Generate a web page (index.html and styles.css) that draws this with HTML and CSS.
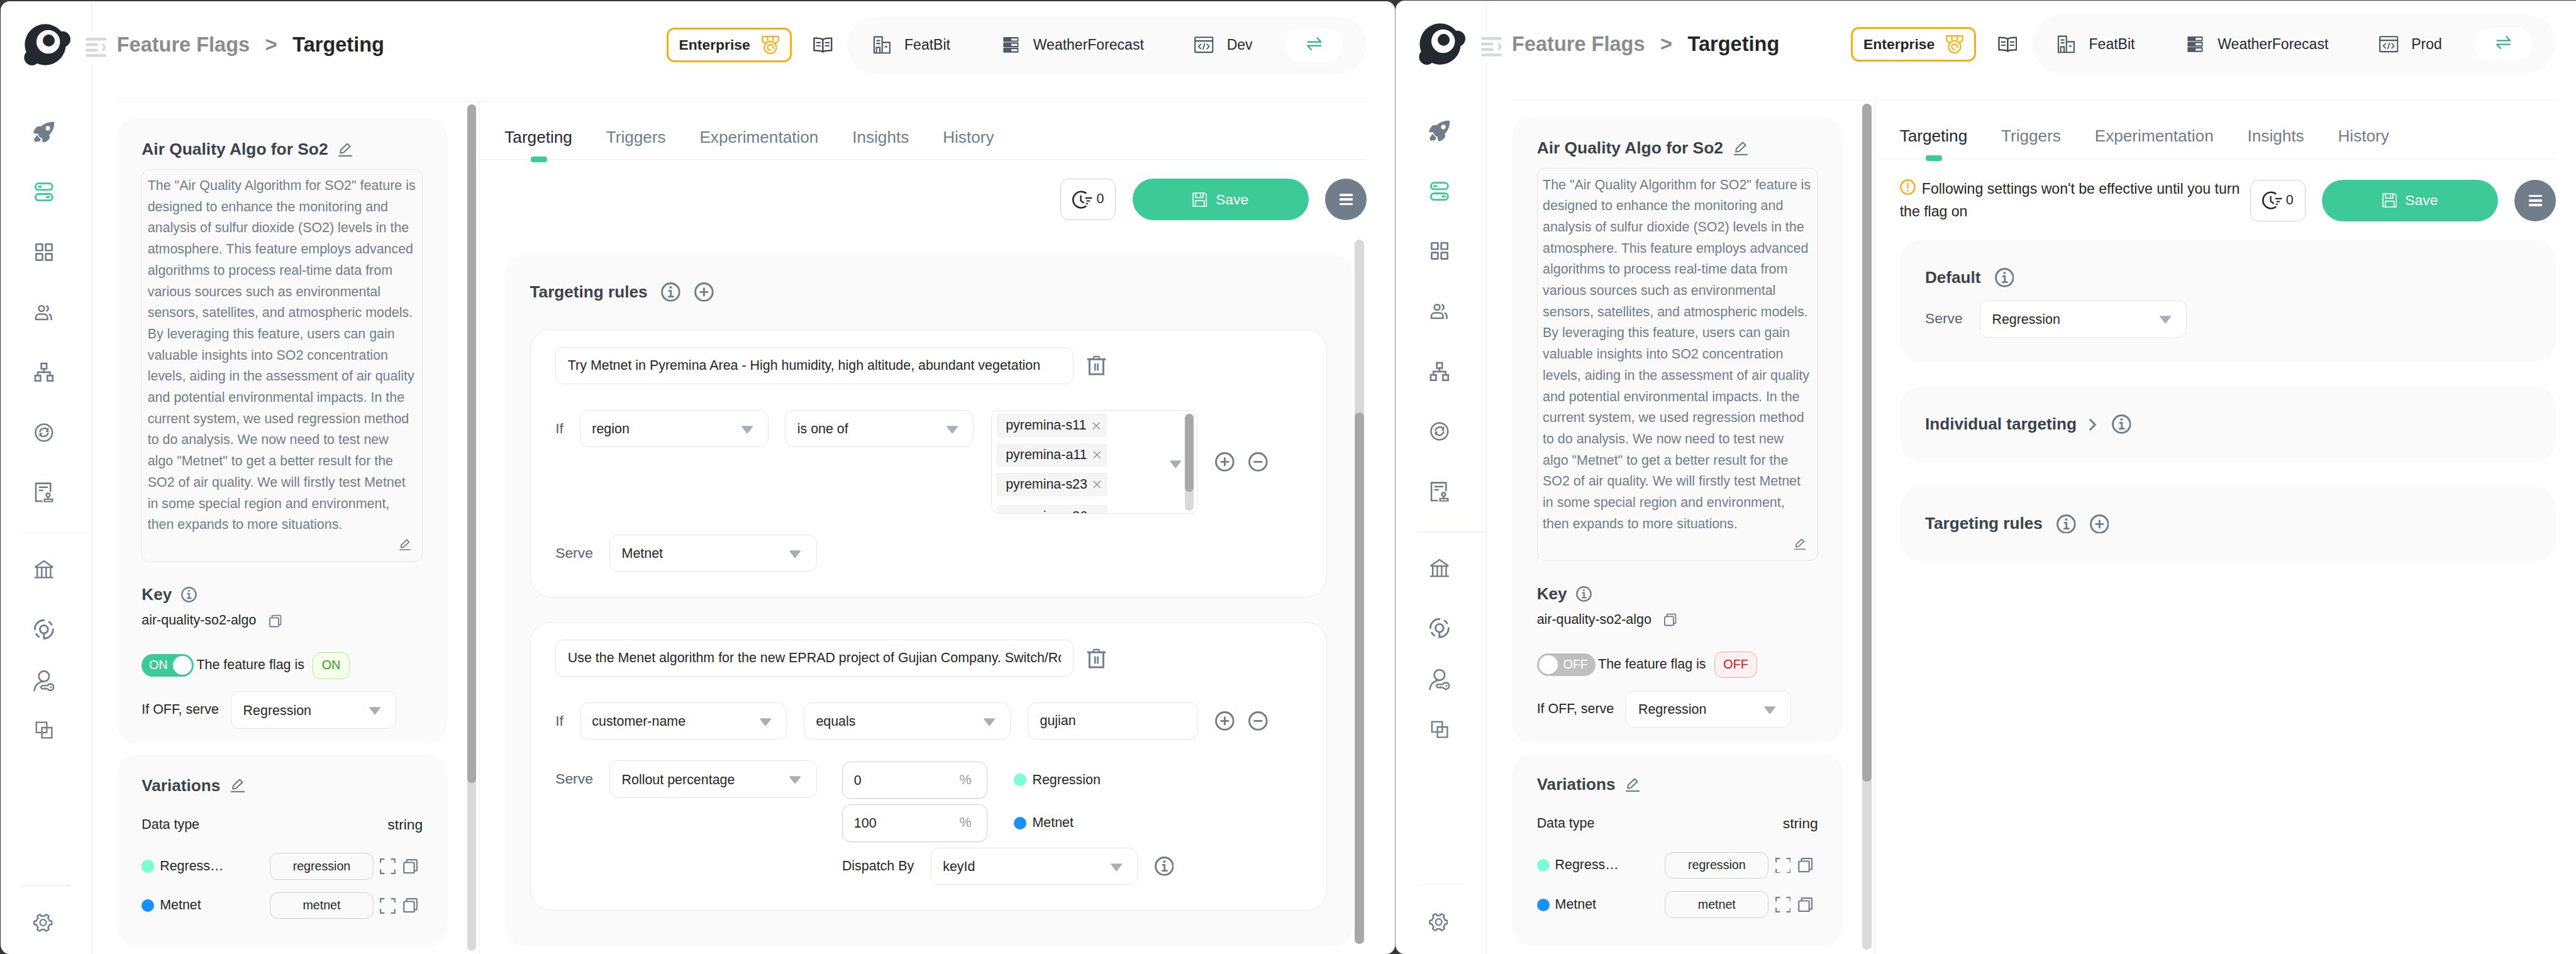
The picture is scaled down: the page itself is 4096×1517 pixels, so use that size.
FILE: index.html
```html
<!DOCTYPE html>
<html lang="en">
<head>
<meta charset="utf-8">
<title>Feature Flags - Targeting</title>
<link rel="stylesheet" href="styles.css">
</head>
<body>

<!-- Icon sprite -->
<svg class="sprite" width="0" height="0" aria-hidden="true">
  <symbol id="logo" viewBox="0 0 101 90">
    <circle cx="46.5" cy="45" r="44.6"/><circle cx="83.5" cy="33.5" r="17.5"/><circle cx="17.5" cy="73" r="17"/>
    <circle cx="52.8" cy="39" r="25.6" fill="#fff"/><circle cx="54" cy="36" r="13"/>
  </symbol>
  <symbol id="toggle" viewBox="0 0 45 42">
    <path d="M3 3h39M3 15h21M3 27h21M3 39h39" fill="none" stroke="currentColor" stroke-width="6" stroke-linecap="round"/>
    <path d="M38.500 15.500l3.500 5.500-3.500 5.500" fill="none" stroke="currentColor" stroke-width="5" stroke-linecap="round" stroke-linejoin="round"/>
  </symbol>
  <symbol id="rocket" viewBox="0 0 46 46">
    <path fill-rule="evenodd" d="M45.500 1C34 .8 24 4 16.500 11.300 14 11.600 11.500 10.500 8.500 11.500 5.500 13 2 19 .4 23.500c-.4 1.600.3 2.800 1.800 2.800l7.800.2c1 5 4 9 9 9.500l1 8.500c.3 1.500 1.800 2 3 1.500 5-1.500 9-4.500 11.500-8 1.200-2.500 1.500-5 0-8C42 22 45.800 12 45.500 1zM31.500 10a5 5 0 1 1 0 10 5 5 0 0 1 0-10z"/>
    <path d="M6.500 30.500l3 .6 2.500 4 4.500 3.400-4 6-3.500-1.500-1 1.800-6-.8 1-4.500-2-2 4-2.500z"/>
  </symbol>
  <symbol id="flags" viewBox="0 0 46 46">
    <rect x="4.500" y="5" width="37" height="14" rx="7" fill="none" stroke="currentColor" stroke-width="3.800"/>
    <rect x="4.500" y="28" width="37" height="13.800" rx="6.900" fill="none" stroke="currentColor" stroke-width="3.800"/>
    <rect x="9.500" y="9.900" width="9" height="4.400" rx="2.200"/><rect x="27.500" y="32.500" width="9" height="4.400" rx="2.200"/>
  </symbol>
  <symbol id="grid" viewBox="0 0 46 46">
    <g fill="none" stroke="currentColor" stroke-width="3.600"><rect x="6" y="5.800" width="13.700" height="13.700" rx=".5"/><rect x="26.800" y="5.800" width="13.700" height="13.700" rx=".5"/><rect x="6" y="26.800" width="13.700" height="13.700" rx=".5"/><rect x="26.800" y="26.800" width="13.700" height="13.700" rx=".5"/></g>
  </symbol>
  <symbol id="people" viewBox="0 0 46 46">
    <g fill="none" stroke="currentColor" stroke-width="3.500" stroke-linecap="round" stroke-linejoin="round"><circle cx="17.800" cy="14.500" r="6"/><path d="M5.300 38.200v-3.500c0-5 3.500-8 8-8h9.500c4.500 0 8 3 8 8v3.500z"/><path d="M29 9.200c4.500 2.500 4.500 8 0 10.600M35 27.300c4 1.700 4.300 5.500 4 11"/></g>
  </symbol>
  <symbol id="org" viewBox="0 0 46 46">
    <g fill="none" stroke="currentColor" stroke-width="3.600"><rect x="17.300" y="4" width="11.500" height="11.500"/><rect x="4" y="30.300" width="11.500" height="11.500"/><rect x="30.500" y="30.300" width="11.500" height="11.500"/><path d="M23 15.500V23M9.800 30v-7h26.500v7"/></g>
  </symbol>
  <symbol id="sync" viewBox="0 0 46 46">
    <g fill="none" stroke="currentColor" stroke-width="3.400" stroke-linecap="round"><circle cx="23" cy="23" r="18.300"/><path d="M14.300 20.500c2.500-7.500 12.500-9 17.200-3M32 24.500c-2.500 7.500-12.500 9-17.200 3"/><path d="M32 14.500v6.200h-3.500zM14.300 31v-6.500h3.500z" fill="currentColor" stroke-width="2"/></g>
  </symbol>
  <symbol id="audit" viewBox="0 0 46 46">
    <g fill="none" stroke="currentColor" stroke-width="3.500"><path d="M37.300 22V3.600H5.500v38.800h14.200" stroke-linejoin="round"/><path d="M12 12h19.500M12 19h9.700" stroke-width="3.200"/><circle cx="32" cy="29" r="4"/><path d="M32 33v4" /><path d="M24 38h17.500v5H24z" stroke-width="3"/></g>
  </symbol>
  <symbol id="bank" viewBox="0 0 46 46">
    <path d="M2.500 41.500h41M3.500 19.300h39M3.500 19L23 5.500 42.500 19M8.500 20v21M18.200 20v21M27.800 20v21M37.500 20v21" fill="none" stroke="currentColor" stroke-width="3.300" stroke-linejoin="round"/>
  </symbol>
  <symbol id="target" viewBox="0 0 46 46">
    <g fill="none" stroke="currentColor" stroke-width="3.900"><circle cx="23" cy="22.800" r="8.700"/><path d="M3.200 22.800A19.800 19.800 0 0 1 23 3M42.800 22.800A19.800 19.800 0 0 1 23 42.600V32" stroke-linecap="round"/><path d="M34 6.700a19 19 0 0 1 5.600 5.800M6.400 33a19 19 0 0 0 5.600 5.900" stroke-linecap="round"/></g>
  </symbol>
  <symbol id="userkey" viewBox="0 0 46 46">
    <g fill="none" stroke="currentColor" stroke-width="3.500"><circle cx="23" cy="12.800" r="11.300"/><path d="M2.200 45C2.500 33 11 24.500 23 24.200"/><path d="M31 33c3-6 13-4 13 3.500s-10 9-13 3.500H19l-3-3.500 3-3.500z" stroke-width="3.200" stroke-linejoin="round"/></g><circle cx="38.300" cy="36.500" r="2"/><circle cx="25" cy="38" r="1.500"/>
  </symbol>
  <symbol id="copies" viewBox="0 0 46 46">
    <path d="M6.600 6.300h22.500v22.200H6.600zM18.600 17.800h21.500V40H18.600z" fill="none" stroke="currentColor" stroke-width="3.200"/>
  </symbol>
  <symbol id="gear" viewBox="64 64 896 896">
    <path transform="rotate(30 512 512)" d="M924.800 625.700l-65.500-56c3.100-19 4.700-38.400 4.700-57.800s-1.600-38.800-4.700-57.800l65.500-56a32.030 32.030 0 009.300-35.200l-.9-2.600a443.740 443.740 0 00-79.700-137.900l-1.800-2.100a32.120 32.120 0 00-35.100-9.500l-81.300 28.900c-30-24.600-63.500-44-99.700-57.600l-15.700-85a32.050 32.050 0 00-25.800-25.700l-2.700-.5c-52.100-9.400-106.900-9.400-159 0l-2.700.5a32.050 32.050 0 00-25.800 25.700l-15.800 85.400a351.860 351.860 0 00-99 57.400l-81.900-29.100a32 32 0 00-35.100 9.500l-1.800 2.100a446.020 446.020 0 00-79.700 137.900l-.9 2.600c-4.500 12.500-.8 26.500 9.300 35.200l66.300 56.600c-3.100 18.800-4.600 38-4.600 57.100 0 19.200 1.500 38.400 4.600 57.100L99 625.500a32.030 32.030 0 00-9.300 35.200l.9 2.600c18.100 50.400 44.900 96.900 79.700 137.900l1.800 2.100a32.120 32.120 0 0035.100 9.500l81.900-29.100c29.800 24.500 63.100 43.900 99 57.400l15.800 85.400a32.050 32.050 0 0025.800 25.700l2.700.5a449.400 449.400 0 00159 0l2.700-.5a32.050 32.050 0 0025.800-25.700l15.700-85a350 350 0 0099.700-57.600l81.300 28.900a32 32 0 0035.100-9.500l1.800-2.100c34.800-41.100 61.600-87.500 79.700-137.900l.9-2.600c4.500-12.300.8-26.300-9.300-35zM788.300 465.900c2.500 15.100 3.800 30.600 3.800 46.100s-1.300 31-3.800 46.100l-6.600 40.100 74.700 63.900a370.030 370.030 0 01-42.600 73.600L721 702.800l-31.400 25.800c-23.900 19.600-50.500 35-79.300 45.800l-38.100 14.300-17.900 97a377.500 377.500 0 01-85 0l-17.900-97.200-37.800-14.500c-28.500-10.800-55-26.200-78.700-45.700l-31.400-25.900-93.400 33.200c-17-22.900-31.200-47.600-42.600-73.600l75.500-64.500-6.500-40c-2.400-14.900-3.700-30.300-3.700-45.500 0-15.300 1.200-30.600 3.700-45.500l6.500-40-75.500-64.500c11.300-26.100 25.600-50.700 42.600-73.600l93.400 33.200 31.400-25.900c23.700-19.500 50.200-34.900 78.700-45.700l37.900-14.300 17.900-97.200c28.100-3.200 56.800-3.200 85 0l17.900 97 38.100 14.300c28.700 10.800 55.400 26.200 79.300 45.800l31.400 25.800 92.800-32.900c17 22.900 31.200 47.600 42.600 73.600L781.800 426l6.500 39.900zM512 326c-97.200 0-176 78.800-176 176s78.800 176 176 176 176-78.800 176-176-78.800-176-176-176zm79.200 255.200A111.600 111.600 0 01512 614c-29.900 0-58-11.700-79.200-32.800A111.600 111.600 0 01400 502c0-29.900 11.700-58 32.800-79.200C454 401.600 482.100 390 512 390c29.900 0 58 11.600 79.200 32.800A111.600 111.600 0 01624 502c0 29.900-11.700 58-32.800 79.200z"/>
  </symbol>
  <symbol id="medal" viewBox="0 0 38 40">
    <g fill="none" stroke="currentColor" stroke-width="3" stroke-linejoin="round"><path d="M1.600 1.600h34.800v9.400L32 15.500H6L1.600 11zM13 2v9M25 2v9"/><circle cx="19" cy="25.200" r="13" fill="#fff"/><path d="M25 26.500A6.200 6.200 0 1 0 19 31.300" stroke-linecap="round"/></g>
  </symbol>
  <symbol id="book" viewBox="0 0 42 34">
    <g fill="none" stroke="currentColor" stroke-width="3.200" stroke-linejoin="round"><path d="M21 5.500C17 2 10 2 2 2.200v27c8-.3 15-.2 19 2.800 4-3 11-3.100 19-2.800v-27C32 2 25 2 21 5.500zM21 5.500V31"/><path d="M7.500 12h8M7.500 19h8M26.500 12h8M26.500 19h8" stroke-width="2.600" stroke-linecap="round"/></g>
  </symbol>
  <symbol id="building" viewBox="0 0 42 42">
    <g fill="none" stroke="currentColor" stroke-width="2.900"><path d="M4 3.500h17.500v35H4zM21.500 15.500H38v23H21.500M9 38.500v-12h7.500v12"/><path d="M10 11.700h6M10 18h6M28 25h3.500" stroke-linecap="round"/></g>
  </symbol>
  <symbol id="server" viewBox="0 0 42 42">
    <rect x="4.500" y="4" width="33" height="10.500" rx="1.500"/><rect x="4.500" y="15.700" width="33" height="10.500" rx="1.500"/><rect x="4.500" y="27.400" width="33" height="10.500" rx="1.500"/>
    <path d="M22 7h13v4.500H22zM22 18.700h13v4.500H22zM22 30.400h13v4.500H22z" fill="#fafafa"/>
  </symbol>
  <symbol id="code" viewBox="0 0 42 42">
    <g fill="none" stroke="currentColor" stroke-width="2.900" stroke-linejoin="round" stroke-linecap="round"><rect x="1.500" y="4.500" width="38.500" height="32.500" rx="2"/><path d="M2 12.500h38"/><path d="M14 19.500l-5 5 5 5M27.500 19.500l5 5-5 5M22.500 18.500l-3.500 12" stroke-width="2.400"/></g>
  </symbol>
  <symbol id="swap" viewBox="0 0 32 30">
    <path d="M1 10.300h29.500L21.500 1M31 18.500H1.500l9 9.500" fill="none" stroke="currentColor" stroke-width="3"/>
  </symbol>
  <symbol id="edit" viewBox="0 0 30 30">
    <path d="M1.300 28.500h27.400" fill="none" stroke="currentColor" stroke-width="3" stroke-linecap="round"/>
    <path d="M4.500 22.300l.6-6.600L19.300 2.200l6 5.800L11 21.500z" fill="none" stroke="currentColor" stroke-width="2.900" stroke-linejoin="round"/>
  </symbol>
  <symbol id="info" viewBox="0 0 42 42">
    <circle cx="21" cy="21" r="18.900" fill="none" stroke="currentColor" stroke-width="4"/>
    <circle cx="21" cy="11" r="2.700"/><path d="M17.500 18.200h4v12M17 31h9.500" fill="none" stroke="currentColor" stroke-width="3.800" stroke-linecap="round"/>
  </symbol>
  <symbol id="plus" viewBox="0 0 42 42">
    <circle cx="21" cy="21" r="18.900" fill="none" stroke="currentColor" stroke-width="4"/>
    <path d="M13.300 21h15.400M21 13.300v15.400" fill="none" stroke="currentColor" stroke-width="4" stroke-linecap="round"/>
  </symbol>
  <symbol id="minus" viewBox="0 0 42 42">
    <circle cx="21" cy="21" r="18.900" fill="none" stroke="currentColor" stroke-width="4"/>
    <path d="M13.300 21h15.400" fill="none" stroke="currentColor" stroke-width="4" stroke-linecap="round"/>
  </symbol>
  <symbol id="warn" viewBox="0 0 34 34">
    <circle cx="17" cy="17" r="15.200" fill="none" stroke="currentColor" stroke-width="3.300"/>
    <path d="M17 8.500v10.500" stroke="currentColor" stroke-width="3" stroke-linecap="round"/><circle cx="17" cy="24.800" r="1.900"/>
  </symbol>
  <symbol id="copy" viewBox="0 0 32 32">
    <g fill="none" stroke="currentColor" stroke-width="3" stroke-linejoin="round"><rect x="1.600" y="7.500" width="22.500" height="22.800" rx="2"/><path d="M7.500 7V3.500c0-1.200.8-2 2-2H28c1.200 0 2 .8 2 2v20c0 1.200-.8 2-2 2h-3.500"/></g>
  </symbol>
  <symbol id="expand" viewBox="0 0 34 34">
    <path d="M1.500 10V1.500H10M24 1.500h8.500V10M32.500 24v8.500H24M10 32.500H1.500V24" fill="none" stroke="currentColor" stroke-width="3"/>
  </symbol>
  <symbol id="caret" viewBox="0 0 25 17"><path d="M1.500.5h22c1 0 1.400 1 .8 1.800L13.500 16.300c-.5.700-1.500.7-2 0L.7 2.300C.1 1.500.5.500 1.500.500z"/></symbol>
  <symbol id="trash" viewBox="0 0 42 44">
    <g fill="none" stroke="currentColor" stroke-width="4"><path d="M1 8.500h40M6 10v31h30V10"/><path d="M14 8l2-5.500h10L28 8" stroke-width="3"/><path d="M18 19v13M24 19v13" stroke-width="3.600" stroke-linecap="round"/></g>
  </symbol>
  <symbol id="clock" viewBox="0 0 44 40">
    <g fill="none" stroke="currentColor" stroke-width="3.500"><path d="M30.500 6.300A17.600 17.600 0 1 0 30.500 33.500"/><path d="M18.500 10.500V22l7 5" stroke-width="3.200"/><path d="M28.500 16.200H43M31 22.400h7.500M29.500 28.400h4.500" stroke-width="2.800"/></g>
  </symbol>
  <symbol id="save" viewBox="0 0 32 32">
    <g fill="none" stroke="currentColor" stroke-width="2.300" stroke-linejoin="round"><path d="M1.500 1.500h25l4 4v25h-29z"/><path d="M7 2v9h16V2M6.500 30V17.500h19V30M18 4.500v4"/></g>
  </symbol>
  <symbol id="cross" viewBox="0 0 17 17"><path d="M1 1l15 15M16 1L1 16" fill="none" stroke="currentColor" stroke-width="1.900"/></symbol>
  <symbol id="chevron" viewBox="0 0 18 28"><path d="M2.500 2l11.500 12L2.500 26" fill="none" stroke="currentColor" stroke-width="4"/></symbol>
</svg>

<div class="window window-dev">
  <aside class="sidebar">
    <svg class="logo"><use href="#logo"/></svg>
    <button class="collapse" aria-label="Expand menu"><svg><use href="#toggle"/></svg></button>
    <nav class="nav nav-main">
      <svg><use href="#rocket"/></svg>
      <svg class="active"><use href="#flags"/></svg>
      <svg><use href="#grid"/></svg>
      <svg><use href="#people"/></svg>
      <svg><use href="#org"/></svg>
      <svg><use href="#sync"/></svg>
      <svg><use href="#audit"/></svg>
    </nav>
    <hr class="rule-line rule-wide">
    <nav class="nav nav-admin">
      <svg><use href="#bank"/></svg>
      <svg><use href="#target"/></svg>
      <svg><use href="#userkey"/></svg>
      <svg><use href="#copies"/></svg>
    </nav>
    <hr class="rule-line rule-short">
    <svg class="settings"><use href="#gear"/></svg>
  </aside>

  <main class="main">
    <header class="header">
      <h1 class="crumbs"><span>Feature Flags</span><span>&gt;</span><b>Targeting</b></h1>
      <div class="header-right">
        <div class="license">Enterprise<svg><use href="#medal"/></svg></div>
        <svg class="docs"><use href="#book"/></svg>
        <div class="context">
          <div class="context-item"><svg><use href="#building"/></svg>FeatBit</div>
          <div class="context-item"><svg><use href="#server"/></svg>WeatherForecast</div>
          <div class="context-item"><svg><use href="#code"/></svg><span class="env">Dev</span></div>
          <button class="switch-env" aria-label="Switch"><svg><use href="#swap"/></svg></button>
        </div>
      </div>
    </header>

    <div class="body">
      <section class="details">
        <div class="details-cards">
          <div class="card card-flag">
            <h2 class="title">Air Quality Algo for So2<svg class="i-edit"><use href="#edit"/></svg></h2>
            <div class="description">
              <p>The "Air Quality Algorithm for SO2" feature is<br>designed to enhance the monitoring and<br>analysis of sulfur dioxide (SO2) levels in the<br>atmosphere. This feature employs advanced<br>algorithms to process real-time data from<br>various sources such as environmental<br>sensors, satellites, and atmospheric models.<br>By leveraging this feature, users can gain<br>valuable insights into SO2 concentration<br>levels, aiding in the assessment of air quality<br>and potential environmental impacts. In the<br>current system, we used regression method<br>to do analysis. We now need to test new<br>algo "Metnet" to get a better result for the<br>SO2 of air quality. We will firstly test Metnet<br>in some special region and environment,<br>then expands to more situations.</p>
              <svg class="i-edit-small"><use href="#edit"/></svg>
            </div>
            <h3 class="title title-key">Key<svg class="i-info-small"><use href="#info"/></svg></h3>
            <div class="key">air-quality-so2-algo<svg class="i-copy-small"><use href="#copy"/></svg></div>
            <div class="status">
              <span class="toggle toggle-on">ON<i></i></span>
              <span>The feature flag is</span>
              <span class="tag tag-on">ON</span>
            </div>
            <div class="off-serve">If OFF, serve<div class="select select-off">Regression<svg><use href="#caret"/></svg></div></div>
          </div>
          <div class="card card-variations">
            <h3 class="title title-variations">Variations<svg class="i-edit"><use href="#edit"/></svg></h3>
            <div class="datatype"><span>Data type</span><span class="datatype-value">string</span></div>
            <div class="variation"><i class="dot mint"></i><span class="variation-name">Regress…</span><span class="value">regression</span><svg class="i-expand"><use href="#expand"/></svg><svg class="i-copy"><use href="#copy"/></svg></div>
            <div class="variation"><i class="dot blue"></i><span class="variation-name">Metnet</span><span class="value">metnet</span><svg class="i-expand"><use href="#expand"/></svg><svg class="i-copy"><use href="#copy"/></svg></div>
          </div>
        </div>
        <div class="scroll scroll-details"><i></i></div>
      </section>

      <section class="content">
        <nav class="tabs"><a class="current">Targeting</a><a>Triggers</a><a>Experimentation</a><a>Insights</a><a>History</a></nav>
        <div class="toolbar">
          <button class="pending"><svg><use href="#clock"/></svg>0</button>
          <button class="save"><svg><use href="#save"/></svg>Save</button>
          <button class="menu" aria-label="Menu"><i></i><i></i><i></i></button>
        </div>

        <div class="rules-scroll">
          <div class="panel rules">
            <h3 class="title heading">Targeting rules<svg><use href="#info"/></svg><svg><use href="#plus"/></svg></h3>

            <article class="rule">
              <div class="rule-name"><div class="input">Try Metnet in Pyremina Area - High humidity, high altitude, abundant vegetation</div><svg class="i-trash"><use href="#trash"/></svg></div>
              <div class="condition">
                <span class="label">If</span>
                <div class="select w-narrow">region<svg><use href="#caret"/></svg></div>
                <div class="select w-narrow">is one of<svg><use href="#caret"/></svg></div>
                <div class="multi">
                  <div class="chips">
                    <span class="chip">pyremina-s11<svg><use href="#cross"/></svg></span>
                    <span class="chip">pyremina-a11<svg><use href="#cross"/></svg></span>
                    <span class="chip">pyremina-s23<svg><use href="#cross"/></svg></span>
                    <span class="chip chip-last">pyremina-s26<svg><use href="#cross"/></svg></span>
                  </div>
                  <svg class="multi-caret"><use href="#caret"/></svg>
                  <div class="scroll scroll-multi"><i></i></div>
                </div>
                <div class="actions"><svg><use href="#plus"/></svg><svg><use href="#minus"/></svg></div>
              </div>
              <div class="serve">
                <span class="label">Serve</span>
                <div class="select w-wide">Metnet<svg><use href="#caret"/></svg></div>
              </div>
            </article>

            <article class="rule">
              <div class="rule-name"><div class="input">Use the Menet algorithm for the new EPRAD project of Gujian Company. Switch/Rollout</div><svg class="i-trash"><use href="#trash"/></svg></div>
              <div class="condition">
                <span class="label">If</span>
                <div class="select w-wide">customer-name<svg><use href="#caret"/></svg></div>
                <div class="select w-wide">equals<svg><use href="#caret"/></svg></div>
                <div class="input input-value">gujian</div>
                <div class="actions"><svg><use href="#plus"/></svg><svg><use href="#minus"/></svg></div>
              </div>
              <div class="serve">
                <span class="label">Serve</span>
                <div class="select w-wide">Rollout percentage<svg><use href="#caret"/></svg></div>
                <div class="rollout">
                  <div class="rollout-row"><div class="percent"><span>0</span><em>%</em></div><i class="dot mint"></i>Regression</div>
                  <div class="rollout-row"><div class="percent"><span>100</span><em>%</em></div><i class="dot blue"></i>Metnet</div>
                  <div class="dispatch">Dispatch By<div class="select w-wide">keyId<svg><use href="#caret"/></svg></div><svg class="i-info"><use href="#info"/></svg></div>
                </div>
              </div>
            </article>
          </div>
          <div class="scroll scroll-rules"><i></i></div>
        </div>
      </section>
    </div>
  </main>
</div>

<!-- Same shell as the first window; shared parts are filled in by app.js -->
<div class="window window-prod">
  <aside data-shared=".sidebar"></aside>
  <main class="main">
    <header data-shared=".header"></header>
    <div class="body">
      <section data-shared=".details"></section>
      <section class="content">
        <nav data-shared=".tabs"></nav>
        <div class="toolbar">
          <p class="notice"><svg><use href="#warn"/></svg>Following settings won't be effective until you turn<br>the flag on</p>
          <button class="pending"><svg><use href="#clock"/></svg>0</button>
          <button class="save"><svg><use href="#save"/></svg>Save</button>
          <button class="menu" aria-label="Menu"><i></i><i></i><i></i></button>
        </div>
        <div class="panels">
          <div class="panel panel-default">
            <h3 class="title heading">Default<svg><use href="#info"/></svg></h3>
            <div class="default-serve"><span class="label">Serve</span><div class="select w-wide">Regression<svg><use href="#caret"/></svg></div></div>
          </div>
          <div class="panel panel-short"><h3 class="title heading">Individual targeting<svg class="i-chevron"><use href="#chevron"/></svg><svg><use href="#info"/></svg></h3></div>
          <div class="panel panel-short"><h3 class="title heading">Targeting rules<svg><use href="#info"/></svg><svg><use href="#plus"/></svg></h3></div>
        </div>
      </section>
    </div>
  </main>
</div>
<script src="app.js"></script>
</body>
</html>
```
FILE: app.js
```js
const dev = document.querySelector('.window-dev');
const prod = document.querySelector('.window-prod');

prod.querySelectorAll('[data-shared]').forEach((slot) => {
  slot.replaceWith(dev.querySelector(slot.dataset.shared).cloneNode(true));
});

// The flag is switched off in production.
prod.querySelector('.env').textContent = 'Prod';
const toggle = prod.querySelector('.toggle');
toggle.className = 'toggle toggle-off';
toggle.innerHTML = '<i></i>OFF';
const tag = prod.querySelector('.tag');
tag.className = 'tag tag-off';
tag.textContent = 'OFF';
```
FILE: styles.css
```css
html { font-size: 7.32737px; }
* { box-sizing: border-box; }
body {
  margin: 0;
  height: 1517px;
  overflow: hidden;
  display: flex;
  background: #383838;
  color: #262626;
  font-family: "Liberation Sans", Arial, sans-serif;
  font-size: 2.925rem;
  line-height: 1.2;
}
h1, h2, h3, p, hr { margin: 0; }
button { font: inherit; border: 0; padding: 0; background: none; flex: none; }
svg { display: block; flex: none; fill: currentColor; }
.sprite { position: absolute; }
i { font-style: normal; }

/* Windows */
.window { display: flex; background: #fff; flex: none; overflow: hidden; }
.window-dev { width: 302.6rem; height: 206.8rem; margin: .3rem .15rem 0 .1rem; border-radius: 2rem; box-shadow: .1rem 0 0 #a5a5a5; }
.window-prod { width: 256.3rem; height: 207rem; margin-top: .1rem; border-radius: 2rem 0 0 2rem; }

/* Sidebar */
.sidebar {
  position: relative;
  width: 19.8rem;
  flex: none;
  border-right: .2rem solid #eeeef5;
  padding: 4.9rem .7rem 0 0;
  display: flex;
  flex-direction: column;
  align-items: center;
  color: #717d8a;
}
.logo { width: 10.1rem; height: 9rem; color: #24292f; margin-left: 1.2rem; }
.collapse { position: absolute; left: 18.5rem; top: 6.6rem; width: 4.5rem; height: 6.9rem; background: #fff; display: flex; align-items: center; color: #d5d8dd; }
.collapse svg { width: 4.5rem; height: 4.2rem; }
.nav { display: flex; flex-direction: column; }
.nav svg { width: 4.6rem; height: 4.6rem; }
.nav .active { color: #3dc998; }
.nav-main { margin-top: 12.1rem; gap: 8.45rem; }
.rule-line { border: 0; height: .2rem; background: #f0f0f7; flex: none; }
.rule-wide { width: 15.1rem; align-self: flex-end; margin: 6.4rem -.7rem 5.4rem 0; }
.nav-admin svg:nth-child(2) { margin-top: 8.45rem; }
.nav-admin svg:nth-child(3) { margin-top: 6.6rem; }
.nav-admin svg:nth-child(4) { margin-top: 6.15rem; }
.rule-short { width: 10.6rem; margin: 31.3rem 0 5.9rem .8rem; }
.settings { width: 4.2rem; height: 4.2rem; margin-right: .4rem; }

/* Header */
.main { flex: 1; min-width: 0; display: flex; flex-direction: column; padding-left: 5.45rem; }
.window-dev .main { padding-right: 6.1rem; }
.window-prod .main { padding-right: 4.45rem; }
.header { height: 21.75rem; flex: none; border-bottom: .2rem solid #eeeef4; padding-top: 3.2rem; display: flex; align-items: flex-start; justify-content: space-between; }
.crumbs { height: 12.6rem; display: flex; align-items: center; gap: 3.35rem; font-size: 4.44rem; color: #8c8c8c; white-space: nowrap; }
.crumbs b { color: #262626; }
.header-right { display: flex; align-items: center; height: 12.6rem; }
.license { width: 27.15rem; height: 7.5rem; border: 3px solid #faad14; border-radius: 1.7rem; padding: 0 2.3rem; display: flex; align-items: center; justify-content: space-between; font-weight: bold; font-size: 3.13rem; color: #262626; }
.license svg { width: 3.8rem; height: 4rem; color: #faad14; }
.docs { width: 4.2rem; height: 3.4rem; margin: 0 3.2rem 0 4.7rem; color: #3b434c; }
.context { height: 12.6rem; background: #fafafa; border-radius: 6.3rem; padding: 0 5.4rem 0 5.4rem; display: flex; align-items: center; font-size: 3.14rem; color: #24292f; }
.context-item { display: flex; align-items: center; gap: 2.8rem; margin-right: 11rem; }
.context-item:nth-child(3) { margin-right: 7.3rem; }
.context-item svg { width: 4.2rem; height: 4.2rem; color: #4d5965; }
.switch-env { width: 12.1rem; height: 7.3rem; border-radius: 3rem; background: #fff; display: flex; align-items: center; justify-content: center; color: #2fb183; }
.switch-env svg { width: 3.2rem; height: 3rem; margin-bottom: .6rem; }

/* Details column */
.body { flex: 1; min-height: 0; display: flex; }
.details { width: 78.85rem; flex: none; display: flex; border-right: .2rem solid #eeeef4; padding-top: .65rem; }
.details-cards { width: 71.85rem; margin-right: 4.2rem; padding-top: 2.95rem; }
.card { background: #fafafa; border-radius: 4.5rem; padding: 0 5.45rem 0 5.4rem; overflow: hidden; }
.card-flag { height: 135.85rem; padding-top: 4.3rem; }
.card-variations { height: 41.7rem; margin-top: 2.3rem; padding-top: 4.2rem; }
.title { display: flex; align-items: center; height: 5rem; color: #3b434c; font-weight: bold; font-size: 3.57rem; white-space: nowrap; }
.title svg { color: #717d8a; }
.card-flag > h2 { font-size: 3.6rem; }
.i-edit { width: 3rem; height: 3rem; margin-left: 2.3rem; }
.description { height: 85.3rem; margin-top: 1.75rem; border: .2rem solid #e6e6e6; border-radius: 1.8rem; padding: 1.25rem 1rem 2.4rem 1.15rem; color: #717d8a; display: flex; flex-direction: column; justify-content: space-between; }
.description p { line-height: 4.6rem; white-space: nowrap; }
.i-edit-small { width: 2.5rem; height: 2.5rem; align-self: flex-end; margin-right: 1.5rem; }
.title-key { height: 4rem; margin-top: 5.1rem; }
.i-info-small { width: 3.4rem; height: 3.4rem; margin-left: 2rem; }
.key { height: 4rem; margin-top: 1.65rem; display: flex; align-items: center; }
.i-copy-small { width: 2.7rem; height: 2.9rem; margin-left: 2.8rem; color: #717d8a; }
.status { height: 5.8rem; margin-top: 4.8rem; display: flex; align-items: center; }
.toggle { height: 4.9rem; border-radius: 2.45rem; margin-right: .6rem; display: flex; align-items: center; color: #fff; font-size: 2.7rem; }
.toggle i { width: 4.1rem; height: 4.1rem; border-radius: 50%; background: #fff; }
.toggle-on { width: 11.3rem; background: #3dc998; padding: 0 .4rem 0 1.6rem; justify-content: space-between; }
.toggle-off { width: 12.7rem; background: #bfbfbf; padding: 0 1.6rem 0 .4rem; justify-content: space-between; }
.tag { height: 5.8rem; border: .2rem solid; border-radius: 1.8rem; margin-left: 1.8rem; padding: 0 1.85rem; display: flex; align-items: center; font-size: 2.7rem; }
.tag-on { color: #389e0d; background: #f6ffed; border-color: #b7eb8f; }
.tag-off { color: #cf1322; background: #fff1f0; border-color: #ffa39e; }
.off-serve { margin-top: 2.7rem; display: flex; align-items: center; justify-content: flex-start; }
.off-serve .select { width: 35.9rem; margin-left: 2.6rem; }
.datatype { height: 4rem; margin-top: 4rem; display: flex; align-items: center; justify-content: space-between; }
.datatype-value { font-size: 3.12rem; }
.variation { height: 5.8rem; margin-top: 4.1rem; display: flex; align-items: center; }
.variation + .variation { margin-top: 2.75rem; }
.variation-name { margin-left: 1.2rem; flex: 1; }
.dot { width: 2.75rem; height: 2.75rem; border-radius: 50%; flex: none; }
.mint { background: #7dfdd2; }
.blue { background: #1890ff; }
.value { width: 22.5rem; height: 5.8rem; border: .2rem solid #d0d0d0; border-radius: 1.8rem; display: flex; align-items: center; justify-content: center; font-size: 2.68rem; }
.i-expand { width: 3.4rem; height: 3.4rem; margin-left: 1.4rem; color: #717d8a; }
.i-copy { width: 3.2rem; height: 3.2rem; margin: 0 1.1rem 0 1.6rem; color: #717d8a; }

/* Scrollbars */
.scroll { width: 1.95rem; border-radius: 1rem; background: #d9d9d9; flex: none; }
.scroll i { display: block; border-radius: 1rem; background: #a8a8a8; }
.scroll-details { height: 183.6rem; }
.scroll-details i { height: 147.2rem; }

/* Form controls */
.select, .input { height: 8.1rem; border: .2rem solid #e6e6e6; border-radius: 1.8rem; background: #fff; flex: none; display: flex; align-items: center; color: #262626; font-size: 2.925rem; white-space: nowrap; }
.select { padding: .4rem 3.25rem 0 2.55rem; justify-content: space-between; }
.select svg { width: 2.5rem; height: 1.7rem; color: #a6aeb8; }
.w-narrow { width: 40.95rem; }
.w-wide { width: 45rem; }
.label { font-size: 3.12rem; color: #56626f; height: 8.1rem; display: flex; align-items: center; }

/* Tabs */
.content { flex: 1; min-width: 0; }
.tabs { height: 12.65rem; border-bottom: .2rem solid #eeeef4; padding: 5.6rem 0 0 5.3rem; display: flex; gap: 7.35rem; color: #717d8a; font-size: 3.57rem; line-height: 4.2rem; }
.tabs .current { position: relative; color: #24292f; }
.tabs .current::after { content: ""; position: absolute; left: calc(50% - 1.7rem); top: 6.3rem; width: 3.6rem; height: 1.2rem; border-radius: .5rem; background: #3dc998; }

/* Toolbar */
.toolbar { height: 9rem; margin-top: 4.1rem; padding-left: 5.3rem; display: flex; align-items: center; justify-content: flex-end; }
.window-prod .toolbar { margin-top: 4.5rem; }
.notice { margin-right: auto; font-size: 3.15rem; line-height: 4.85rem; white-space: nowrap; }
.notice svg { display: inline-block; width: 3.4rem; height: 3.4rem; margin-right: 1.4rem; vertical-align: -.2rem; color: #faad14; }
.pending { width: 12rem; height: 9rem; border: .2rem solid #d0d0d0; border-radius: 1.8rem; background: #fff; display: flex; align-items: center; justify-content: center; gap: .8rem; color: #262626; }
.pending svg { width: 4.4rem; height: 4rem; }
.save { width: 38.25rem; height: 9rem; margin: 0 3.55rem 0 3.6rem; border-radius: 4.5rem; background: #3dc998; color: #fff; font-size: 3.12rem; display: flex; align-items: center; justify-content: center; gap: 1.8rem; }
.save svg { width: 3.2rem; height: 3.2rem; }
.menu { width: 9.05rem; height: 9rem; border-radius: 50%; background: #717d8a; display: flex; flex-direction: column; align-items: center; justify-content: center; gap: .5rem; }
.menu i { width: 2.9rem; height: .5rem; border-radius: .15rem; background: #fff; }

/* Panels */
.panel { background: #fafafa; border-radius: 4.5rem; padding: 5.6rem 5.5rem 0; }
.heading svg { width: 4.2rem; height: 4.2rem; margin-left: 3rem; }
.heading .i-chevron { width: 1.8rem; height: 2.8rem; margin-left: 2.6rem; }
.heading .i-chevron + svg { margin-left: 3.3rem; }
.panels { padding: 4.15rem 0 0 5.3rem; display: flex; flex-direction: column; gap: 5.4rem; }
.panel-default { height: 26.45rem; }
.panel-short { height: 16.2rem; }
.default-serve { display: flex; align-items: center; gap: 3.7rem; margin-top: 2.4rem; }

.rules-scroll { display: flex; align-items: flex-start; padding: 4.2rem .65rem 0 5.3rem; justify-content: space-between; }
.rules { width: 184rem; height: 150.1rem; margin-top: 3.3rem; }
.scroll-rules { height: 152.9rem; padding-top: 37.5rem; }
.scroll-rules i { height: 115.4rem; }

/* Rules */
.rule { margin-top: 5.6rem; border: .2rem solid #ebebeb; border-radius: 4.5rem; background: #fff; padding: 3.7rem 5.3rem 5.4rem 5.4rem; }
.rule + .rule { margin-top: 5.35rem; }
.rule-name { display: flex; align-items: center; gap: 2.85rem; }
.rule-name .input { width: 112.5rem; display: block; line-height: 7.8rem; overflow: clip; overflow-clip-margin: content-box; }
.input { padding: 0 2.55rem; }
.i-trash { width: 4.2rem; height: 4.4rem; color: #717d8a; }
.condition { display: flex; align-items: flex-start; margin-top: 5.55rem; gap: 3.6rem; }
.condition .label { width: 1.65rem; }
.input-value { width: 37rem; }
.actions { align-self: center; display: flex; gap: 3rem; margin-left: .15rem; color: #717d8a; }
.actions svg, .i-info { width: 4.2rem; height: 4.2rem; color: #717d8a; }
.multi { width: 44.8rem; height: 22.5rem; margin: 0 .1rem 0 .2rem; border: .2rem solid #e6e6e6; border-radius: 1.8rem; background: #fff; overflow: hidden; display: flex; padding: .75rem .65rem .7rem 1.05rem; }
.chips { display: flex; flex-direction: column; align-items: flex-start; gap: 1.4rem; flex: 1; }
.chip { height: 5rem; flex: none; border: .2rem solid #f0f0f0; border-radius: .4rem; background: #f5f5f5; padding: 0 1.15rem 0 1.85rem; display: flex; align-items: center; gap: 1.3rem; }
.chip svg { width: 1.7rem; height: 1.7rem; color: #8c8c8c; }
.chip-last { margin-top: .6rem; }
.multi-caret { width: 2.5rem; height: 1.7rem; color: #a6aeb8; align-self: center; margin: .9rem .75rem 0 0; }
.scroll-multi { height: 20.9rem; }
.scroll-multi i { height: 16.9rem; }
.serve { display: flex; align-items: flex-start; margin-top: 4.5rem; }
.serve > .label { margin-right: 3.55rem; }
.rollout { margin: .2rem 0 0 5.5rem; display: flex; flex-direction: column; gap: 1.25rem; }
.rollout-row { display: flex; align-items: center; }
.rollout-row .dot { margin: 0 1.3rem 0 5.7rem; }
.percent { width: 31.55rem; height: 8.1rem; border: .2rem solid #d0d0d0; border-radius: 1.8rem; padding: 0 3.35rem 0 2.45rem; display: flex; align-items: center; justify-content: space-between; box-shadow: 0 .3rem .3rem -.2rem rgba(0,0,0,.06); }
.percent span { padding-top: .3rem; }
.percent em { font-style: normal; color: #999; }
.dispatch { display: flex; align-items: center; gap: 3.6rem; }
```
